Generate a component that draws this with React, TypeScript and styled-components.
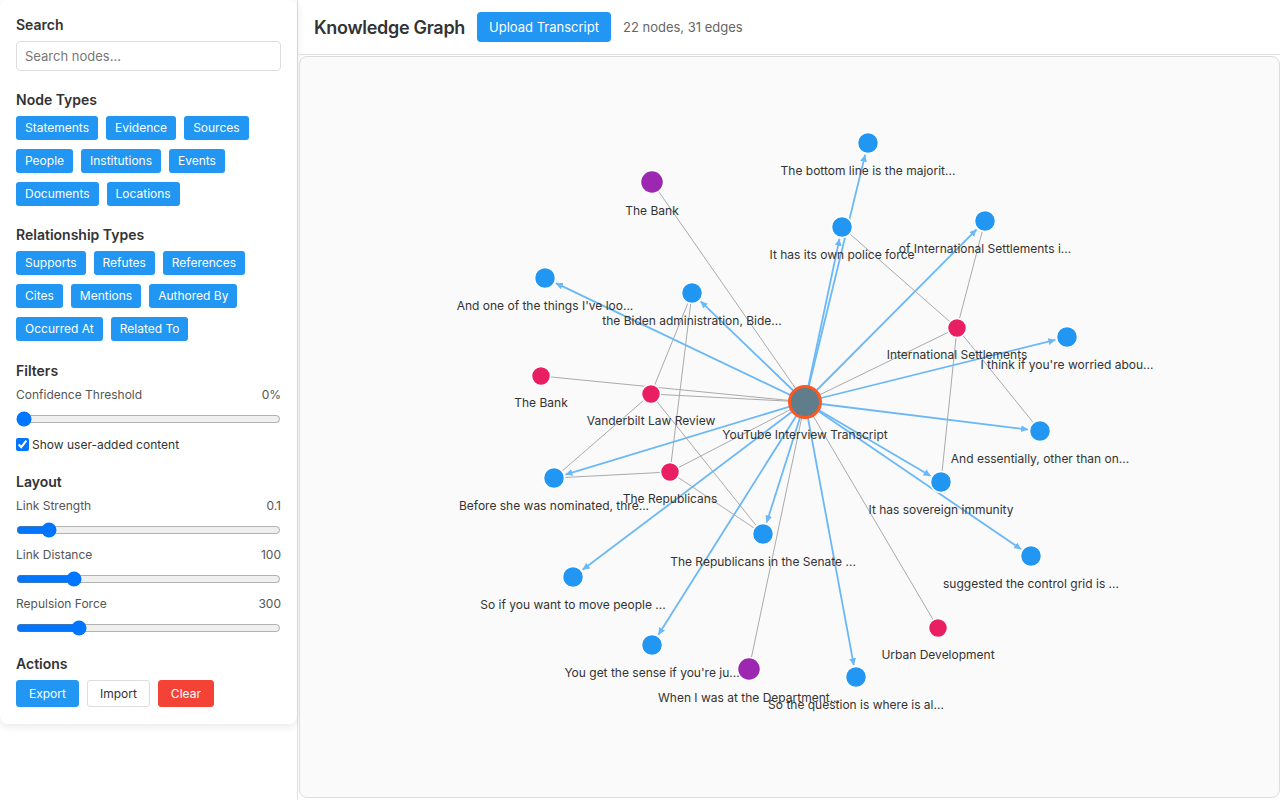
import React from 'react';
import styled, { createGlobalStyle } from 'styled-components';

type Kind = 'source' | 'statement' | 'institution' | 'person';

interface GraphNode {
  id: string;
  x: number;
  y: number;
  kind: Kind;
  label: string;
}

interface GraphEdge {
  from: string;
  to: string;
  kind: 'mentions' | 'related';
}

const nodeStyle: Record<Kind, { r: number; fill: string; stroke: string; width: number }> = {
  source: { r: 15.5, fill: '#607d8b', stroke: '#ff5722', width: 3 },
  statement: { r: 10.5, fill: '#2196f3', stroke: '#fff', width: 1.5 },
  institution: { r: 9.5, fill: '#e91e63', stroke: '#fff', width: 1.5 },
  person: { r: 11.5, fill: '#9c27b0', stroke: '#fff', width: 1.5 },
};

const nodes: GraphNode[] = [
  { id: 'src', x: 505, y: 345, kind: 'source', label: 'YouTube Interview Transcript' },
  { id: 's1', x: 568, y: 86, kind: 'statement', label: 'The bottom line is the majorit...' },
  { id: 's2', x: 542, y: 170, kind: 'statement', label: 'It has its own police force' },
  { id: 's3', x: 685, y: 164, kind: 'statement', label: 'of International Settlements i...' },
  { id: 's4', x: 245, y: 221, kind: 'statement', label: "And one of the things I've loo..." },
  { id: 's5', x: 392, y: 236, kind: 'statement', label: 'the Biden administration, Bide...' },
  { id: 's6', x: 767, y: 280, kind: 'statement', label: "I think if you're worried abou..." },
  { id: 's7', x: 740, y: 374, kind: 'statement', label: 'And essentially, other than on...' },
  { id: 's8', x: 254, y: 421, kind: 'statement', label: 'Before she was nominated, thre...' },
  { id: 's9', x: 641, y: 425, kind: 'statement', label: 'It has sovereign immunity' },
  { id: 's10', x: 463, y: 477, kind: 'statement', label: 'The Republicans in the Senate ...' },
  { id: 's11', x: 731, y: 499, kind: 'statement', label: 'suggested the control grid is ...' },
  { id: 's12', x: 273, y: 520, kind: 'statement', label: 'So if you want to move people ...' },
  { id: 's13', x: 352, y: 588, kind: 'statement', label: "You get the sense if you're ju..." },
  { id: 's14', x: 556, y: 620, kind: 'statement', label: 'So the question is where is al...' },
  { id: 'i1', x: 241, y: 319, kind: 'institution', label: 'The Bank' },
  { id: 'i2', x: 351, y: 337, kind: 'institution', label: 'Vanderbilt Law Review' },
  { id: 'i3', x: 657, y: 271, kind: 'institution', label: 'International Settlements' },
  { id: 'i4', x: 370, y: 415, kind: 'institution', label: 'The Republicans' },
  { id: 'i5', x: 638, y: 571, kind: 'institution', label: 'Urban Development' },
  { id: 'p1', x: 352, y: 125, kind: 'person', label: 'The Bank' },
  { id: 'p2', x: 449, y: 612, kind: 'person', label: 'When I was at the Department...' },
];

const statementIds = nodes.filter((n) => n.kind === 'statement').map((n) => n.id);

const edges: GraphEdge[] = [
  ...statementIds.map((id) => ({ from: 'src', to: id, kind: 'mentions' as const })),
  ...['i1', 'i2', 'i3', 'i4', 'i5', 'p1', 'p2'].map((id) => ({ from: 'src', to: id, kind: 'related' as const })),
  { from: 'i2', to: 's5', kind: 'related' },
  { from: 'i4', to: 's5', kind: 'related' },
  { from: 'i2', to: 's8', kind: 'related' },
  { from: 'i4', to: 's8', kind: 'related' },
  { from: 'i2', to: 's10', kind: 'related' },
  { from: 'i4', to: 's10', kind: 'related' },
  { from: 'i3', to: 's2', kind: 'related' },
  { from: 'i3', to: 's3', kind: 'related' },
  { from: 'i3', to: 's7', kind: 'related' },
  { from: 'i3', to: 's9', kind: 'related' },
];

const byId = Object.fromEntries(nodes.map((n) => [n.id, n]));

const nodeTypes = ['Statements', 'Evidence', 'Sources', 'People', 'Institutions', 'Events', 'Documents', 'Locations'];
const relTypes = ['Supports', 'Refutes', 'References', 'Cites', 'Mentions', 'Authored By', 'Occurred At', 'Related To'];

const GlobalStyle = createGlobalStyle`
  html, body {
    margin: 0;
    padding: 0;
    background: #fff;
    font-family: Inter, "Noto Sans", "Liberation Sans", sans-serif;
    color: #333;
  }
  * { box-sizing: border-box; }
`;

const AppShell = styled.div`
  display: flex;
  height: 100vh;
  width: 100vw;
  overflow: hidden;
`;

const SidebarColumn = styled.aside`
  width: 298px;
  flex-shrink: 0;
  border-right: 1px solid #e0e0e0;
`;

const Panel = styled.div`
  display: flex;
  flex-direction: column;
  background: #fff;
  border-radius: 8px;
  box-shadow: 0 2px 10px rgba(0, 0, 0, 0.1);
  padding: 16px 16px 17px;
`;

const Section = styled.section<{ $gap?: number }>`
  margin-bottom: ${(p) => (p.$gap ?? 20)}px;
  &:last-child { margin-bottom: 0; }
`;

const Heading = styled.h3`
  margin: 0 0 7px;
  font-size: 14px;
  line-height: 18px;
  font-weight: 600;
  color: #333;
`;

const SearchInput = styled.input`
  display: block;
  width: 100%;
  height: 30px;
  padding: 0 8px;
  border: 1px solid #ddd;
  border-radius: 4px;
  font-family: inherit;
  font-size: 13px;
  color: #333;
  outline: none;
  &::placeholder { color: #777; }
`;

const ChipList = styled.div`
  display: flex;
  flex-wrap: wrap;
  gap: 9px 8px;
`;

const Chip = styled.button`
  height: 24px;
  padding: 0 9px;
  border: none;
  border-radius: 3px;
  background: #2196f3;
  color: #fff;
  font-family: inherit;
  font-size: 12px;
  line-height: 24px;
  cursor: pointer;
`;

const ControlGroup = styled.div``;

const ControlLabel = styled.div`
  display: flex;
  justify-content: space-between;
  font-size: 12px;
  line-height: 16px;
  color: #555;
`;

const Range = styled.input`
  display: block;
  width: 100%;
  height: 16px;
  margin: 8px 0 9px;
`;

const CheckRow = styled.label`
  display: flex;
  align-items: center;
  height: 16px;
  font-size: 12px;
  color: #333;
  input {
    margin: 0 3px 0 0;
    width: 13px;
    height: 13px;
  }
`;

const ButtonRow = styled.div`
  display: flex;
  gap: 8px;
`;

const ActionButton = styled.button<{ $variant: 'primary' | 'plain' | 'danger' }>`
  height: 27px;
  padding: 0 12px;
  border-radius: 3px;
  font-family: inherit;
  font-size: 12px;
  cursor: pointer;
  border: 1px solid
    ${(p) => (p.$variant === 'primary' ? '#2196f3' : p.$variant === 'danger' ? '#f44336' : '#ddd')};
  background: ${(p) => (p.$variant === 'primary' ? '#2196f3' : p.$variant === 'danger' ? '#f44336' : '#fff')};
  color: ${(p) => (p.$variant === 'plain' ? '#333' : '#fff')};
`;

const Main = styled.main`
  flex: 1;
  display: flex;
  flex-direction: column;
  min-width: 0;
`;

const TopBar = styled.header`
  height: 55px;
  flex-shrink: 0;
  display: flex;
  align-items: center;
  gap: 12px;
  padding: 0 16px;
  border-bottom: 1px solid #e0e0e0;
`;

const Title = styled.h2`
  margin: 0;
  font-size: 18px;
  font-weight: 600;
  letter-spacing: -0.3px;
  color: #333;
`;

const UploadButton = styled.button`
  height: 30px;
  padding: 0 12px;
  border: none;
  border-radius: 4px;
  background: #2196f3;
  color: #fff;
  font-family: inherit;
  font-size: 13px;
  cursor: pointer;
`;

const Stats = styled.span`
  font-size: 13px;
  color: #666;
`;

const Canvas = styled.div`
  flex: 1;
  margin: 1px 0 2px 1px;
  border: 1px solid #ddd;
  border-radius: 8px;
  background: #fafafa;
  overflow: hidden;
`;

const GraphSvg = styled.svg`
  display: block;
  width: 100%;
  height: 100%;
`;

const EdgeLine = styled.line<{ $kind: GraphEdge['kind'] }>`
  stroke: ${(p) => (p.$kind === 'mentions' ? '#6bb8f7' : '#aaa')};
  stroke-width: ${(p) => (p.$kind === 'mentions' ? 1.8 : 1)};
`;

const NodeLabel = styled.text`
  font-family: Inter, "Noto Sans", "Liberation Sans", sans-serif;
  font-size: 12px;
  fill: #333;
  text-anchor: middle;
`;

function Edge({ edge }: { edge: GraphEdge }) {
  const a = byId[edge.from];
  const b = byId[edge.to];
  let x2 = b.x;
  let y2 = b.y;
  if (edge.kind === 'mentions') {
    // stop the arrow at the rim of the target circle
    const dx = b.x - a.x;
    const dy = b.y - a.y;
    const len = Math.hypot(dx, dy);
    const back = nodeStyle[b.kind].r + 1.5;
    x2 = b.x - (dx / len) * back;
    y2 = b.y - (dy / len) * back;
  }
  return (
    <EdgeLine
      $kind={edge.kind}
      x1={a.x}
      y1={a.y}
      x2={x2}
      y2={y2}
      markerEnd={edge.kind === 'mentions' ? 'url(#arrow)' : undefined}
    />
  );
}

function Node({ node }: { node: GraphNode }) {
  const s = nodeStyle[node.kind];
  return (
    <g>
      <circle cx={node.x} cy={node.y} r={s.r} fill={s.fill} stroke={s.stroke} strokeWidth={s.width} />
      <NodeLabel x={node.x} y={node.y + s.r + 21.5}>
        {node.label}
      </NodeLabel>
    </g>
  );
}

function Slider({ label, value, min, max, step }: { label: string; value: number; min: number; max: number; step?: number }) {
  return (
    <ControlGroup>
      <ControlLabel>
        <span>{label}</span>
        <span>{value}</span>
      </ControlLabel>
      <Range type="range" min={min} max={max} step={step ?? 1} defaultValue={value} />
    </ControlGroup>
  );
}

const App = () => {
  return (
    <AppShell>
      <GlobalStyle />
      <SidebarColumn>
        <Panel>
          <Section>
            <Heading>Search</Heading>
            <SearchInput placeholder="Search nodes..." />
          </Section>

          <Section>
            <Heading>Node Types</Heading>
            <ChipList>
              {nodeTypes.map((t) => (
                <Chip key={t}>{t}</Chip>
              ))}
            </ChipList>
          </Section>

          <Section $gap={21}>
            <Heading>Relationship Types</Heading>
            <ChipList>
              {relTypes.map((t) => (
                <Chip key={t}>{t}</Chip>
              ))}
            </ChipList>
          </Section>

          <Section $gap={21}>
            <Heading>Filters</Heading>
            <ControlGroup>
              <ControlLabel>
                <span>Confidence Threshold</span>
                <span>0%</span>
              </ControlLabel>
              <Range type="range" min={0} max={100} defaultValue={0} />
            </ControlGroup>
            <CheckRow>
              <input type="checkbox" defaultChecked />
              Show user-added content
            </CheckRow>
          </Section>

          <Section $gap={10}>
            <Heading>Layout</Heading>
            <Slider label="Link Strength" value={0.1} min={0} max={1} step={0.1} />
            <Slider label="Link Distance" value={100} min={50} max={300} />
            <Slider label="Repulsion Force" value={300} min={100} max={1000} />
          </Section>

          <Section>
            <Heading>Actions</Heading>
            <ButtonRow>
              <ActionButton $variant="primary">Export</ActionButton>
              <ActionButton $variant="plain">Import</ActionButton>
              <ActionButton $variant="danger">Clear</ActionButton>
            </ButtonRow>
          </Section>
        </Panel>
      </SidebarColumn>

      <Main>
        <TopBar>
          <Title>Knowledge Graph</Title>
          <UploadButton>Upload Transcript</UploadButton>
          <Stats>22 nodes, 31 edges</Stats>
        </TopBar>
        <Canvas>
          <GraphSvg>
            <defs>
              <marker
                id="arrow"
                viewBox="0 -5 10 10"
                refX={10}
                refY={0}
                markerWidth={7}
                markerHeight={7}
                markerUnits="userSpaceOnUse"
                orient="auto"
              >
                <path d="M0,-5L10,0L0,5Z" fill="#6bb8f7" />
              </marker>
            </defs>
            <g>
              {edges.map((e) => (
                <Edge key={`${e.from}-${e.to}`} edge={e} />
              ))}
            </g>
            <g>
              {nodes.map((n) => (
                <Node key={n.id} node={n} />
              ))}
            </g>
          </GraphSvg>
        </Canvas>
      </Main>
    </AppShell>
  );
};

export default App;
